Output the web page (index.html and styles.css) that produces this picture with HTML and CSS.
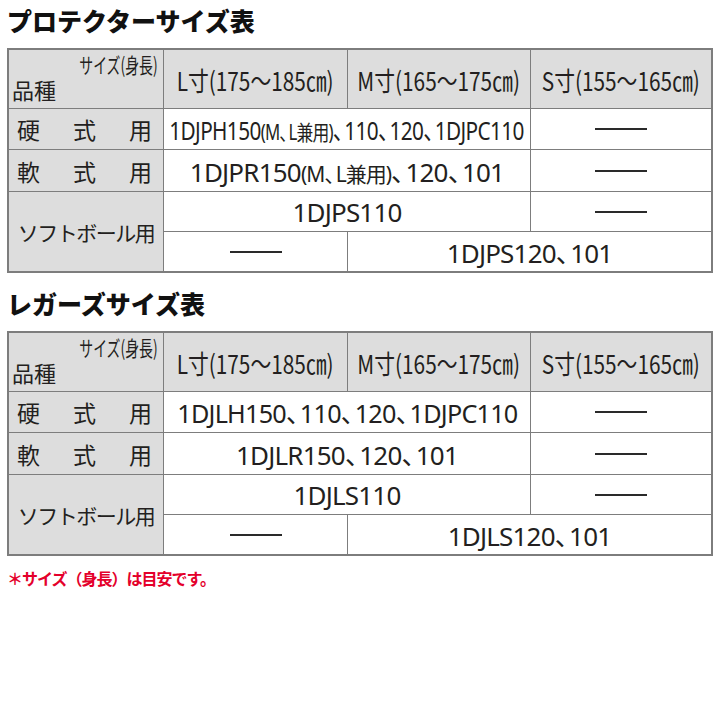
FILE: index.html
```html
<!DOCTYPE html>
<html lang="ja">
<head>
<meta charset="utf-8">
<link rel="stylesheet" href="styles.css">
</head>
<body>
<div class="page">
  <h2 class="title">プロテクターサイズ表</h2>
  <div class="size-table">
    <div class="cell head corner">
      <span class="corner-top"><span class="cond">サイズ(身長)</span></span>
      <span class="corner-bottom">品種</span>
    </div>
    <div class="cell head"><span class="cond hdr">L寸(175～185㎝)</span></div>
    <div class="cell head"><span class="cond hdr">M寸(165～175㎝)</span></div>
    <div class="cell head"><span class="cond hdr">S寸(155～165㎝)</span></div>

    <div class="cell head label"><span>硬</span><span>式</span><span>用</span></div>
    <div class="cell span2"><span class="data cond-data p1">1DJPH150<small>(M<span class="c">、</span>L兼用)</small><span class="c">、</span>110<span class="c">、</span>120<span class="c">、</span>1DJPC110</span></div>
    <div class="cell"><span class="dash"></span></div>

    <div class="cell head label"><span>軟</span><span>式</span><span>用</span></div>
    <div class="cell span2"><span class="data">1DJPR150<small>(M<span class="c">、</span>L兼用)</small><span class="c">、</span>120<span class="c">、</span>101</span></div>
    <div class="cell"><span class="dash"></span></div>

    <div class="cell head soft">ソフトボール用</div>
    <div class="cell span2"><span class="data">1DJPS110</span></div>
    <div class="cell"><span class="dash"></span></div>

    <div class="cell"><span class="dash"></span></div>
    <div class="cell span2"><span class="data">1DJPS120<span class="c">、</span>101</span></div>
  </div>

  <h2 class="title second">レガーズサイズ表</h2>
  <div class="size-table">
    <div class="cell head corner">
      <span class="corner-top"><span class="cond">サイズ(身長)</span></span>
      <span class="corner-bottom">品種</span>
    </div>
    <div class="cell head"><span class="cond hdr">L寸(175～185㎝)</span></div>
    <div class="cell head"><span class="cond hdr">M寸(165～175㎝)</span></div>
    <div class="cell head"><span class="cond hdr">S寸(155～165㎝)</span></div>

    <div class="cell head label"><span>硬</span><span>式</span><span>用</span></div>
    <div class="cell span2"><span class="data cond-data p2">1DJLH150<span class="c">、</span>110<span class="c">、</span>120<span class="c">、</span>1DJPC110</span></div>
    <div class="cell"><span class="dash"></span></div>

    <div class="cell head label"><span>軟</span><span>式</span><span>用</span></div>
    <div class="cell span2"><span class="data">1DJLR150<span class="c">、</span>120<span class="c">、</span>101</span></div>
    <div class="cell"><span class="dash"></span></div>

    <div class="cell head soft">ソフトボール用</div>
    <div class="cell span2"><span class="data">1DJLS110</span></div>
    <div class="cell"><span class="dash"></span></div>

    <div class="cell"><span class="dash"></span></div>
    <div class="cell span2"><span class="data">1DJLS120<span class="c">、</span>101</span></div>
  </div>

  <p class="note">＊サイズ（身長）は目安です。</p>
</div>
</body>
</html>
```

FILE: styles.css
```css
html, body {
  margin: 0;
  padding: 0;
  background: #ffffff;
}

body {
  font-family: "Noto Sans", "Noto Sans CJK JP", sans-serif;
  color: #231f20;
}

.page {
  width: 706px;
  padding: 5px 7px 0;
}

.title {
  font-family: "Noto Sans CJK JP", sans-serif;
  font-weight: 900;
  font-size: 25px;
  line-height: 30px;
  margin: 0 0 13px;
  color: #111;
}

.title.second {
  margin-top: 15px;
}

.size-table {
  display: grid;
  grid-template-columns: 154px 183px 182px 180px;
  grid-template-rows: 58px 40px 41px 39px 39px;
  gap: 1px;
  background: #7d7d7d;
  border: 2px solid #7d7d7d;
}

.cell {
  background: #ffffff;
  display: flex;
  align-items: center;
  justify-content: center;
}

.cell.head {
  background: #dddddd;
}

.span2 {
  grid-column: span 2;
}

.corner {
  flex-direction: column;
  align-items: stretch;
  justify-content: space-between;
  padding: 2px 5px 7px 3px;
  background: linear-gradient(to top right, #dddddd calc(50% - 0.8px), #5a5a5a 50%, #dddddd calc(50% + 0.8px));
}

.corner-top {
  text-align: right;
  font-family: "Noto Sans CJK JP", sans-serif;
  font-size: 21px;
  line-height: 24px;
}

.corner-top .cond {
  display: inline-block;
  transform: scaleX(0.66);
  transform-origin: right center;
}

.corner-bottom {
  font-family: "Noto Sans CJK JP", sans-serif;
  font-size: 22px;
  line-height: 24px;
  text-align: left;
}

.hdr {
  display: inline-block;
  font-family: "Noto Sans CJK JP", sans-serif;
  font-size: 26px;
  transform: scaleX(0.8);
  white-space: nowrap;
}

.label {
  justify-content: space-between;
  padding: 0 11px 0 8px;
  font-family: "Noto Sans CJK JP", sans-serif;
  font-size: 23px;
  font-weight: 400;
}

.soft {
  grid-row: span 2;
  font-family: "Noto Sans CJK JP", sans-serif;
  font-size: 21px;
  letter-spacing: -1.5px;
}

.data {
  font-size: 26px;
  white-space: nowrap;
  letter-spacing: -0.8px;
}

.data small {
  font-size: 21px;
  letter-spacing: -1px;
}

.c {
  letter-spacing: -0.5em;
  margin-right: 0.05em;
}

.cond-data {
  display: inline-block;
}

.p1 {
  transform: scaleX(0.8);
}

.p2 {
  transform: scaleX(0.97);
}

.dash {
  display: block;
  width: 52px;
  height: 2px;
  background: #2a2a2a;
}

.note {
  margin: 12px 0 0;
  font-family: "Noto Sans CJK JP", sans-serif;
  font-size: 16px;
  line-height: 20px;
  font-weight: 700;
  color: #e4002b;
  letter-spacing: -1px;
}
```
